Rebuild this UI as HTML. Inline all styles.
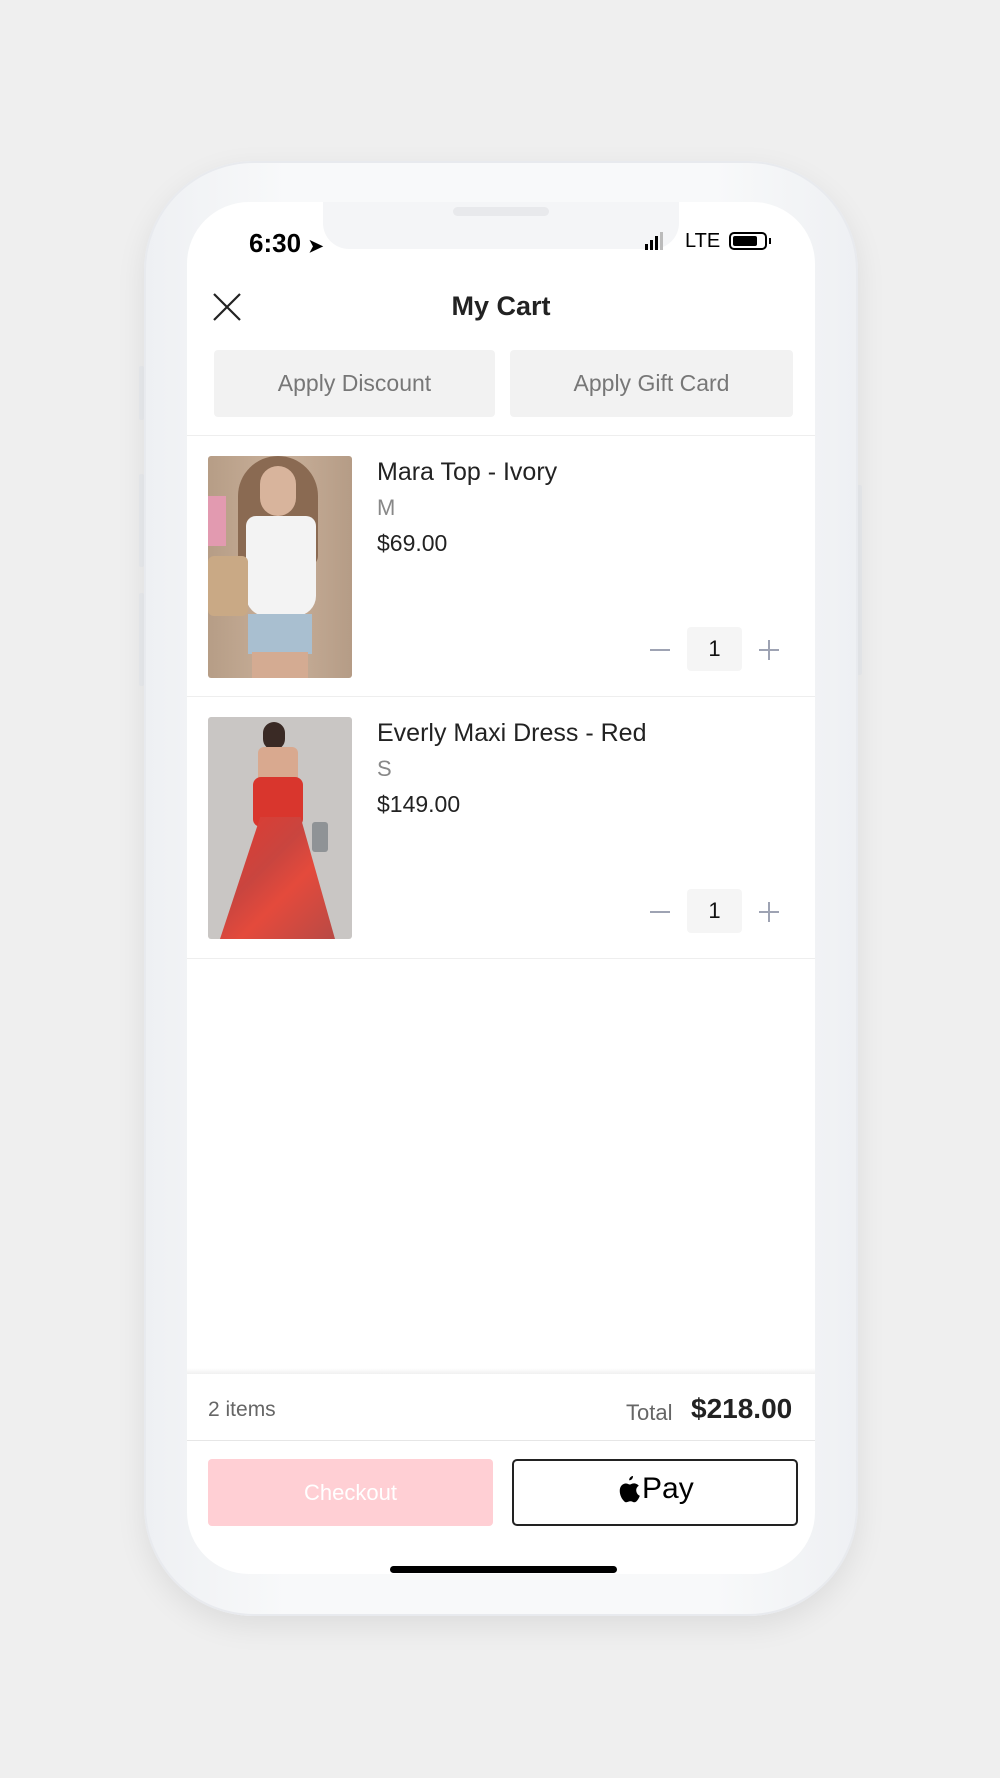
<!DOCTYPE html>
<html><head><meta charset="utf-8"><style>
*{margin:0;padding:0;box-sizing:border-box}
body{width:1000px;height:1778px;background:#efefef;position:relative;overflow:hidden;font-family:"Liberation Sans",sans-serif;color:#222}
.abs{position:absolute}
.phone{left:144px;top:161px;width:714px;height:1455px;border-radius:110px;background:linear-gradient(90deg,#eef0f3,#f8f9fa 20%,#f8f9fa 80%,#eef0f3);box-shadow:0 10px 30px rgba(0,0,0,0.08),inset 0 0 0 2px #e8eaee}
.screen{left:187px;top:202px;width:628px;height:1372px;border-radius:62px;background:#fff;overflow:hidden}
.notch{left:136px;top:-2px;width:356px;height:49px;background:#f4f5f7;border-radius:0 0 26px 26px}
.btn{background:#f2f2f2;border-radius:4px;color:#777;font-size:23px;text-align:center;line-height:67px}
.t{font-size:25px;color:#222}
.sz{font-size:22px;color:#888}
.pr{font-size:23px;color:#222}
.hr{height:1px;background:#eee;left:0;width:628px}
.qb{width:55px;height:44px;background:#f5f5f5;border-radius:4px;text-align:center;line-height:44px;font-size:22px;color:#111}
.mn{width:20px;height:2px;background:#9ea3b3}
</style></head><body>
<div class="abs" style="left:139px;top:366px;width:5px;height:54px;background:#e9ebee;border-radius:2px"></div>
<div class="abs" style="left:139px;top:474px;width:5px;height:93px;background:#e9ebee;border-radius:2px"></div>
<div class="abs" style="left:139px;top:593px;width:5px;height:93px;background:#e9ebee;border-radius:2px"></div>
<div class="abs" style="left:857px;top:485px;width:5px;height:190px;background:#e9ebee;border-radius:2px"></div>
<div class="abs phone"></div>
<div class="abs screen">
  <div class="abs notch"><div class="abs" style="left:130px;top:7px;width:96px;height:9px;border-radius:5px;background:#e8e9ec"></div></div>
  <div class="abs" style="left:62px;top:26px;font-size:26px;font-weight:bold;color:#000">6:30 <span style="font-size:18px">➤</span></div>
  <div class="abs" style="left:458px;top:30px;width:20px;height:18px;">
    <div class="abs" style="left:0;top:12px;width:3px;height:6px;background:#000"></div>
    <div class="abs" style="left:5px;top:8px;width:3px;height:10px;background:#000"></div>
    <div class="abs" style="left:10px;top:4px;width:3px;height:14px;background:#000"></div>
    <div class="abs" style="left:15px;top:0;width:3px;height:18px;background:#bbb"></div>
  </div>
  <div class="abs" style="left:498px;top:28px;font-size:20px;color:#000">LTE</div>
  <div class="abs" style="left:542px;top:30px;width:38px;height:18px;border:2px solid #000;border-radius:5px;padding:2px"><div style="width:24px;height:10px;background:#000;border-radius:2px"></div></div>
  <div class="abs" style="left:582px;top:36px;width:2px;height:6px;background:#000"></div>
  <svg class="abs" style="left:26px;top:91px" width="28" height="28" viewBox="0 0 28 28"><path d="M1 1L27 27M27 1L1 27" stroke="#222" stroke-width="2.2"/></svg>
  <div class="abs" style="left:0;width:628px;top:89px;text-align:center;font-size:27px;font-weight:bold;color:#222">My Cart</div>
  <div class="abs btn" style="left:27px;top:148px;width:281px;height:67px">Apply Discount</div>
  <div class="abs btn" style="left:323px;top:148px;width:283px;height:67px">Apply Gift Card</div>
  <div class="abs hr" style="top:233px"></div>

  <div class="abs" style="left:21px;top:254px;width:144px;height:222px;border-radius:3px;overflow:hidden;background:linear-gradient(90deg,#b69d86,#c9b09a 50%,#b59c86)">
    <div class="abs" style="left:30px;top:0;width:80px;height:110px;background:#8a6a52;border-radius:40px 40px 10px 10px"></div>
    <div class="abs" style="left:52px;top:10px;width:36px;height:50px;background:#d8b49c;border-radius:18px"></div>
    <div class="abs" style="left:38px;top:60px;width:70px;height:100px;background:#f3f3f3;border-radius:10px 10px 20px 20px"></div>
    <div class="abs" style="left:40px;top:158px;width:64px;height:40px;background:#a9bfd0"></div>
    <div class="abs" style="left:0;top:40px;width:18px;height:50px;background:#e29ab0"></div>
    <div class="abs" style="left:0;top:100px;width:40px;height:60px;background:#c9a985;border-radius:6px"></div>
    <div class="abs" style="left:44px;top:196px;width:56px;height:26px;background:#d4ab92"></div>
  </div>
  <div class="abs t" style="left:190px;top:256px">Mara Top - Ivory</div>
  <div class="abs sz" style="left:190px;top:293px">M</div>
  <div class="abs pr" style="left:190px;top:328px">$69.00</div>
  <div class="abs mn" style="left:463px;top:447px"></div>
  <div class="abs qb" style="left:500px;top:425px">1</div>
  <div class="abs mn" style="left:572px;top:447px"></div><div class="abs" style="left:581px;top:438px;width:2px;height:20px;background:#9ea3b3"></div>
  <div class="abs hr" style="top:494px"></div>

  <div class="abs" style="left:21px;top:515px;width:144px;height:222px;border-radius:3px;overflow:hidden;background:#c9c6c4">
    <div class="abs" style="left:55px;top:5px;width:22px;height:28px;background:#3a2a25;border-radius:11px"></div>
    <div class="abs" style="left:50px;top:30px;width:40px;height:40px;background:#d9a98f;border-radius:6px"></div>
    <div class="abs" style="left:45px;top:60px;width:50px;height:50px;background:#d9362d;border-radius:8px"></div>
    <div class="abs" style="left:12px;top:100px;width:115px;height:122px;background:linear-gradient(135deg,#e23a30,#c9453f 40%,#e44a3c 60%,#b84a45);clip-path:polygon(35% 0,70% 0,100% 100%,0 100%)"></div>
    <div class="abs" style="left:104px;top:105px;width:16px;height:30px;background:#8f9396;border-radius:3px"></div>
  </div>
  <div class="abs t" style="left:190px;top:517px">Everly Maxi Dress - Red</div>
  <div class="abs sz" style="left:190px;top:554px">S</div>
  <div class="abs pr" style="left:190px;top:589px">$149.00</div>
  <div class="abs mn" style="left:463px;top:709px"></div>
  <div class="abs qb" style="left:500px;top:687px">1</div>
  <div class="abs mn" style="left:572px;top:709px"></div><div class="abs" style="left:581px;top:700px;width:2px;height:20px;background:#9ea3b3"></div>
  <div class="abs hr" style="top:756px"></div>

  <div class="abs" style="left:0;top:1166px;width:628px;height:6px;background:linear-gradient(#fff,#f0f0f0)"></div>
  <div class="abs" style="left:21px;top:1196px;font-size:21px;color:#666">2 items</div>
  <div class="abs" style="left:439px;top:1198px;font-size:22px;color:#666">Total</div>
  <div class="abs" style="left:504px;top:1191px;font-size:28px;font-weight:bold;color:#222">$218.00</div>
  <div class="abs hr" style="top:1238px;background:#e6e6e6"></div>
  <div class="abs" style="left:21px;top:1257px;width:285px;height:67px;background:#ffcfd4;border-radius:4px;color:#fff;font-size:22px;text-align:center;line-height:67px">Checkout</div>
  <div class="abs" style="left:325px;top:1257px;width:286px;height:67px;border:2px solid #222;border-radius:5px"></div>
  <svg class="abs" style="left:431px;top:1274px" width="22" height="27" viewBox="0 0 22 27"><path d="M15 0c.2 2-1.5 4.3-3.8 4.3C11 2.3 12.7.2 15 0zM18.2 14.3c0-3 2.5-4.4 2.6-4.5-1.4-2.1-3.6-2.3-4.4-2.4-1.9-.2-3.6 1.1-4.6 1.1-1 0-2.4-1.1-4-1C5.8 7.5 3.900 8.700 2.800 10.500c-2.200 3.800-.6 9.500 1.600 12.600 1.100 1.500 2.300 3.200 3.900 3.200 1.600-.1 2.200-1 4.100-1s2.400 1 4 1c1.700 0 2.700-1.500 3.700-3 1.200-1.700 1.700-3.400 1.700-3.500-.1 0-3.400-1.300-3.600-5.500z" fill="#000"/></svg>
  <div class="abs" style="left:455px;top:1270px;font-size:30px;color:#000">Pay</div>
  <div class="abs" style="left:203px;top:1364px;width:227px;height:7px;border-radius:4px;background:#000"></div>
</div>
</body></html>
